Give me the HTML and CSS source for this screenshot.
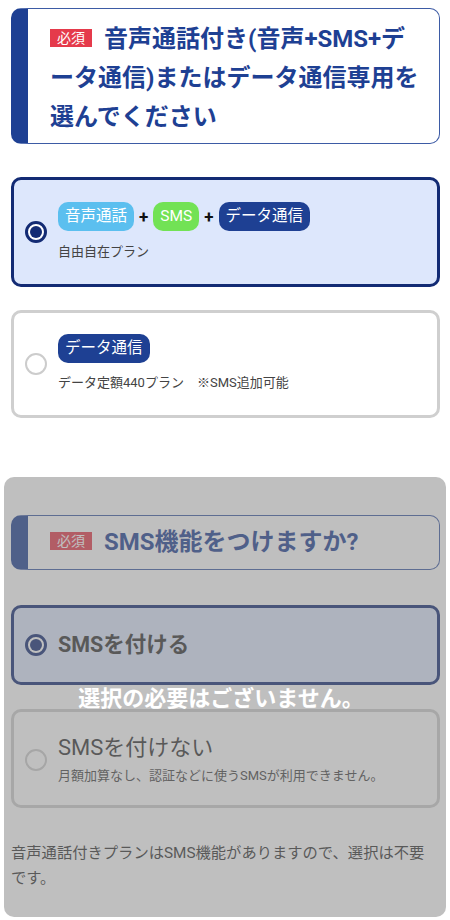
FILE: index.html
```html
<!DOCTYPE html>
<html lang="ja">
<head>
<meta charset="utf-8">
<title>プラン選択</title>
<link rel="stylesheet" href="styles.css">
</head>
<body>
<div class="page">
  <div class="q-head q-head-first">
    <h2 class="q-title"><span class="badge">必須</span>音声通話付き(音声+SMS+データ通信)またはデータ通信専用を選んでください</h2>
  </div>

  <div class="option option-checked option-plan">
    <span class="radio radio-on"></span>
    <div class="option-body">
      <div class="tags">
        <span class="tag tag-voice">音声通話</span>
        <span class="plus">+</span>
        <span class="tag tag-sms">SMS</span>
        <span class="plus">+</span>
        <span class="tag tag-data">データ通信</span>
      </div>
      <div class="sub sub-plan">自由自在プラン</div>
    </div>
  </div>

  <div class="option option-plan option-plan2">
    <span class="radio"></span>
    <div class="option-body">
      <div class="tags">
        <span class="tag tag-data">データ通信</span>
      </div>
      <div class="sub sub-plan sub-plan2">データ定額440プラン　※SMS追加可能</div>
    </div>
  </div>

  <section class="sms-section">
    <div class="q-head q-head-sms">
      <h2 class="q-title"><span class="badge">必須</span>SMS機能をつけますか?</h2>
    </div>

    <div class="option option-checked option-sms1">
      <span class="radio radio-on"></span>
      <div class="option-body">
        <div class="sms-label sms-label-bold">SMSを付ける</div>
      </div>
    </div>

    <div class="option option-sms2">
      <span class="radio"></span>
      <div class="option-body">
        <div class="sms-label">SMSを付けない</div>
        <div class="sub sub-sms">月額加算なし、認証などに使うSMSが利用できません。</div>
      </div>
    </div>

    <p class="note">音声通話付きプランはSMS機能がありますので、選択は不要です。</p>

    <div class="overlay"><span class="overlay-text">選択の必要はございません。</span></div>
  </section>
</div>
</body>
</html>
```

FILE: styles.css
```css
* { box-sizing: border-box; }

html, body {
  margin: 0;
  padding: 0;
  background: #ffffff;
}

body {
  font-family: Roboto, "Noto Sans CJK JP", sans-serif;
  color: #333333;
  width: 450px;
}

.page {
  padding: 8px 10px 0 11px;
}

.q-head {
  border: 1px solid #3d5ba5;
  border-left: 17px solid #1e4093;
  border-radius: 10px;
  background: #ffffff;
  padding: 11px 15px 6px 22px;
}

.q-head-sms {
  padding: 7px 15px 7px 22px;
}

.q-title {
  margin: 0;
  font-size: 24px;
  line-height: 39px;
  font-weight: 700;
  color: #1e4093;
}

.badge {
  display: inline-block;
  background: #e53a4b;
  color: #ffffff;
  font-size: 14px;
  font-weight: 400;
  line-height: 18px;
  padding: 0 7px;
  margin-right: 12px;
  vertical-align: 4px;
}

.option {
  display: flex;
  align-items: center;
  border: 3px solid #cfcfcf;
  border-radius: 10px;
  background: #ffffff;
  padding: 22px 14px 22px 11px;
}

.option-checked {
  border-color: #132b74;
  background: #dde7fc;
}

.option-plan {
  margin-top: 33px;
}

.option-plan2 {
  margin-top: 23px;
  padding-top: 21px;
}

.radio {
  flex: 0 0 auto;
  width: 22px;
  height: 22px;
  border-radius: 50%;
  border: 2px solid #cccccc;
  background: #ffffff;
  margin-right: 11px;
  position: relative;
}

.radio-on {
  border: 3px solid #132b74;
}

.radio-on::after {
  content: "";
  position: absolute;
  left: 2px;
  top: 2px;
  width: 12px;
  height: 12px;
  border-radius: 50%;
  background: #132b74;
}

.option-body {
  flex: 1 1 auto;
  min-width: 0;
}

.tags {
  display: flex;
  align-items: center;
}

.tag {
  display: inline-block;
  height: 29px;
  line-height: 29px;
  padding: 0 7px;
  border-radius: 10px;
  color: #ffffff;
  font-size: 15.5px;
}

.tag-voice { background: #5bbfef; }
.tag-sms { background: #72e255; }
.tag-data { background: #1e4093; }

.plus {
  font-size: 17px;
  font-weight: 700;
  color: #111111;
  padding: 0 5px;
}

.sub {
  font-size: 13px;
  line-height: 20px;
  color: #444444;
}

.sub-plan {
  margin-top: 11px;
}

.sub-plan2 {
  margin-top: 10px;
}

.sms-section {
  position: relative;
  margin: 59px -6px 0 -7px;
  padding: 38px 6px 26px 7px;
  border-radius: 10px;
}

.option-sms1 {
  margin-top: 35px;
  padding-top: 22px;
  padding-bottom: 22px;
}

.option-sms2 {
  margin-top: 24px;
  padding-top: 21px;
  padding-bottom: 19px;
}

.sms-label {
  font-size: 22px;
  line-height: 30px;
  color: #333333;
}

.sms-label-bold {
  font-weight: 700;
  font-size: 21.5px;
}

.sub-sms {
  margin-top: 3px;
}

.note {
  margin: 33px 0 0 0;
  padding-right: 8px;
  font-size: 15.3px;
  line-height: 25px;
  color: #333333;
}

.overlay {
  position: absolute;
  left: 0;
  top: 0;
  right: 0;
  bottom: 0;
  border-radius: 10px;
  background: rgba(128, 128, 128, 0.5);
  display: flex;
  align-items: center;
  justify-content: center;
  padding: 4px 8px 0 0;
}

.overlay-text {
  color: #ffffff;
  font-size: 22px;
  font-weight: 700;
  line-height: 30px;
}
```
